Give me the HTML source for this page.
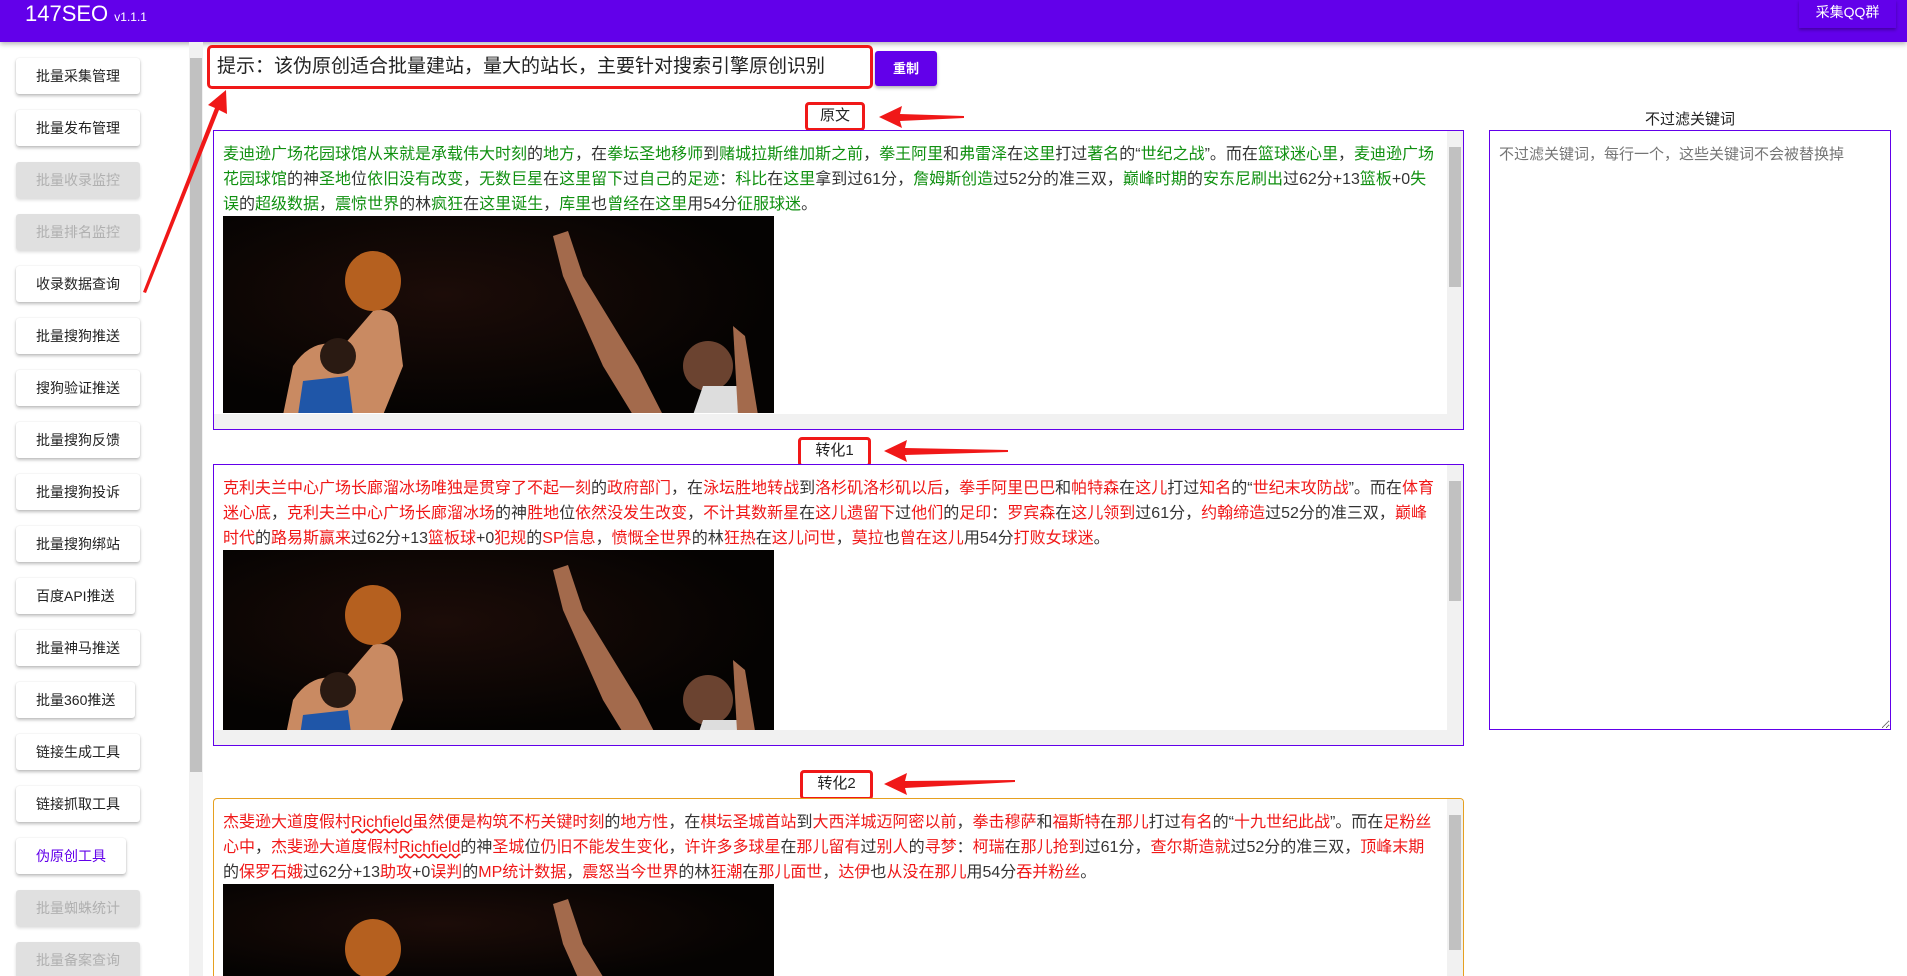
<!DOCTYPE html>
<html><head><meta charset="utf-8">
<style>
*{box-sizing:border-box;margin:0;padding:0}
html{overflow:hidden}
body{width:1907px;height:976px;overflow:hidden;background:#fff;font-family:"Liberation Sans","Noto Sans CJK SC",sans-serif;position:relative;color:#333}
.hdr{position:absolute;left:0;top:0;width:1907px;height:42px;background:#6200ea;box-shadow:0 2px 5px rgba(0,0,0,.3)}
.logo{position:absolute;left:25px;top:0px;color:#fff;font-size:22px;line-height:28px}
.logo small{font-size:12px}
.qq{position:absolute;left:1799px;top:0;width:97px;height:28px;background:#6200ea;color:#fff;font-size:14px;line-height:24px;text-align:center;box-shadow:0 2px 3px rgba(0,0,0,.3)}
.btn{position:absolute;left:16px;height:36px;background:#fff;box-shadow:0 2px 3px rgba(0,0,0,.25),0 0 1px rgba(0,0,0,.15);border-radius:3px;font-size:14px;line-height:36px;padding:0 20px;color:#222}
.btn.dis{background:#e0e0e0;color:#b0b0b0;box-shadow:0 2px 3px rgba(0,0,0,.15)}
.btn.act{color:#6200ea}
.sb{position:absolute;left:189px;top:42px;width:14px;height:934px;background:#f1f1f1}
.sb i{position:absolute;left:1px;top:16px;width:12px;height:714px;background:#c1c1c1}
.tip{position:absolute;left:207px;top:45px;width:666px;height:44px;border:3px solid #f01818;border-radius:5px;font-size:19px;line-height:38px;padding-left:7px;color:#222;white-space:nowrap}
.cz{position:absolute;left:875px;top:51px;width:62px;height:35px;background:#6200ea;color:#fff;font-size:13px;font-weight:bold;text-align:center;line-height:35px;border-radius:3px;box-shadow:0 2px 3px rgba(0,0,0,.3)}
.lbl{position:absolute;font-size:15px;color:#222;text-align:center;border:3px solid #f01818;border-radius:4px;line-height:22px}
.box{position:absolute;left:213px;width:1251px;border:1px solid #6200ea;overflow:hidden;background:#fff}
.txt{position:absolute;left:9px;top:11px;width:1215px;font-size:16px;line-height:25px;color:#333}
.g{color:#109010}.r{color:#f01818}
.u{text-decoration:underline wavy #f01818}
.vs{position:absolute;right:0;top:0;width:16px;background:#f1f1f1}
.vs i{position:absolute;left:2px;width:12px;background:#c1c1c1}
.hs{position:absolute;left:0;right:0;height:15px;background:#f1f1f1}
.img{position:absolute;left:9px;width:551px;background:radial-gradient(ellipse at 40% 40%,#1c0c08,#050302 70%);overflow:hidden}
textarea{position:absolute;left:1489px;top:130px;width:402px;height:600px;border:1px solid #6200ea;font-family:inherit;font-size:15px;padding:12px 9px;color:#999;resize:both}
</style></head><body>
<div class="hdr"><div class="logo">147SEO <small>v1.1.1</small></div><div class="qq">采集QQ群</div></div>

<div class="btn" style="top:58px">批量采集管理</div>
<div class="btn" style="top:110px">批量发布管理</div>
<div class="btn dis" style="top:162px">批量收录监控</div>
<div class="btn dis" style="top:214px">批量排名监控</div>
<div class="btn" style="top:266px">收录数据查询</div>
<div class="btn" style="top:318px">批量搜狗推送</div>
<div class="btn" style="top:370px">搜狗验证推送</div>
<div class="btn" style="top:422px">批量搜狗反馈</div>
<div class="btn" style="top:474px">批量搜狗投诉</div>
<div class="btn" style="top:526px">批量搜狗绑站</div>
<div class="btn" style="top:578px">百度API推送</div>
<div class="btn" style="top:630px">批量神马推送</div>
<div class="btn" style="top:682px">批量360推送</div>
<div class="btn" style="top:734px">链接生成工具</div>
<div class="btn" style="top:786px">链接抓取工具</div>
<div class="btn act" style="top:838px">伪原创工具</div>
<div class="btn dis" style="top:890px">批量蜘蛛统计</div>
<div class="btn dis" style="top:942px">批量备案查询</div>
<div class="sb"><i></i></div>

<div class="tip">提示：该伪原创适合批量建站，量大的站长，主要针对搜索引擎原创识别</div>
<div class="cz">重制</div>

<div class="lbl" style="left:805px;top:102px;width:60px;height:29px">原文</div>
<div class="box" style="top:130px;height:300px">
 <div class="txt"><span class="g">麦迪逊广场花园球馆从来就是承载伟大时刻</span>的<span class="g">地方</span>，在<span class="g">拳坛圣地移师</span>到<span class="g">赌城拉斯维加斯之前</span>，<span class="g">拳王阿里</span>和<span class="g">弗雷泽</span>在<span class="g">这里</span>打过<span class="g">著名</span>的“<span class="g">世纪之战</span>”。而在<span class="g">篮球迷心里</span>，<span class="g">麦迪逊广场花园球馆</span>的神<span class="g">圣地</span>位<span class="g">依旧没有改变</span>，<span class="g">无数巨星</span>在<span class="g">这里留下</span>过<span class="g">自己</span>的<span class="g">足迹</span>：<span class="g">科比</span>在<span class="g">这里</span>拿到过61分，<span class="g">詹姆斯创造</span>过52分的准三双，<span class="g">巅峰时期</span>的<span class="g">安东尼刷出</span>过62分+13<span class="g">篮板</span>+0<span class="g">失误</span>的<span class="g">超级数据</span>，<span class="g">震惊世界</span>的林<span class="g">疯狂</span>在<span class="g">这里诞生</span>，<span class="g">库里</span>也<span class="g">曾经</span>在<span class="g">这里</span>用54分<span class="g">征服球迷</span>。</div>
 <div class="img" style="top:85px;height:197px">
  <svg width="551" height="199"><ellipse cx="150" cy="65" rx="28" ry="30" fill="#b5601f"/><path d="M60 199 L70 150 Q90 120 120 130 L150 95 Q170 90 175 110 L180 150 L160 199Z" fill="#c98a62"/><path d="M75 199 L80 165 L125 160 L130 199Z" fill="#1f56a8"/><circle cx="115" cy="140" r="18" fill="#2a1a12"/><path d="M330 20 L345 15 L360 60 L415 150 L440 199 L410 199 L380 150 L340 60Z" fill="#a36a4c"/><circle cx="485" cy="150" r="25" fill="#6b4330"/><path d="M470 199 L480 170 L520 170 L530 199Z" fill="#ddd"/><path d="M510 110 L522 120 L535 199 L515 199Z" fill="#a36a4c"/></svg>
 </div>
 <div class="vs" style="height:283px"><i style="top:16px;height:140px"></i></div>
 <div class="hs" style="top:283px"></div>
</div>

<div class="lbl" style="left:798px;top:437px;width:73px;height:30px">转化1</div>
<div class="box" style="top:464px;height:282px">
 <div class="txt"><span class="r">克利夫兰中心广场长廊溜冰场唯独是贯穿了不起一刻</span>的<span class="r">政府部门</span>，在<span class="r">泳坛胜地转战</span>到<span class="r">洛杉矶洛杉矶以后</span>，<span class="r">拳手阿里巴巴</span>和<span class="r">帕特森</span>在<span class="r">这儿</span>打过<span class="r">知名</span>的“<span class="r">世纪末攻防战</span>”。而在<span class="r">体育迷心底</span>，<span class="r">克利夫兰中心广场长廊溜冰场</span>的神<span class="r">胜地</span>位<span class="r">依然没发生改变</span>，<span class="r">不计其数新星</span>在<span class="r">这儿遗留下</span>过<span class="r">他们</span>的<span class="r">足印</span>：<span class="r">罗宾森</span>在<span class="r">这儿领到</span>过61分，<span class="r">约翰缔造</span>过52分的准三双，<span class="r">巅峰时代</span>的<span class="r">路易斯赢来</span>过62分+13<span class="r">篮板球</span>+0<span class="r">犯规</span>的<span class="r">SP信息</span>，<span class="r">愤慨全世界</span>的林<span class="r">狂热</span>在<span class="r">这儿问世</span>，<span class="r">莫拉</span>也<span class="r">曾在这儿</span>用54分<span class="r">打败女球迷</span>。</div>
 <div class="img" style="top:85px;height:180px">
  <svg width="551" height="199"><ellipse cx="150" cy="65" rx="28" ry="30" fill="#b5601f"/><path d="M60 199 L70 150 Q90 120 120 130 L150 95 Q170 90 175 110 L180 150 L160 199Z" fill="#c98a62"/><path d="M75 199 L80 165 L125 160 L130 199Z" fill="#1f56a8"/><circle cx="115" cy="140" r="18" fill="#2a1a12"/><path d="M330 20 L345 15 L360 60 L415 150 L440 199 L410 199 L380 150 L340 60Z" fill="#a36a4c"/><circle cx="485" cy="150" r="25" fill="#6b4330"/><path d="M470 199 L480 170 L520 170 L530 199Z" fill="#ddd"/><path d="M510 110 L522 120 L535 199 L515 199Z" fill="#a36a4c"/></svg>
 </div>
 <div class="vs" style="height:265px"><i style="top:16px;height:120px"></i></div>
 <div class="hs" style="top:265px"></div>
</div>

<div class="lbl" style="left:800px;top:770px;width:73px;height:30px">转化2</div>
<div class="box" style="top:798px;height:178px;border-color:#e6a020;border-bottom:none;border-radius:4px 4px 0 0">
 <div class="txt"><span class="r">杰斐逊大道度假村<span class="u">Richfield</span>虽然便是构筑不朽关键时刻</span>的<span class="r">地方性</span>，在<span class="r">棋坛圣城首站</span>到<span class="r">大西洋城迈阿密以前</span>，<span class="r">拳击穆萨</span>和<span class="r">福斯特</span>在<span class="r">那儿</span>打过<span class="r">有名</span>的“<span class="r">十九世纪此战</span>”。而在<span class="r">足粉丝心中</span>，<span class="r">杰斐逊大道度假村<span class="u">Richfield</span></span>的神<span class="r">圣城</span>位<span class="r">仍旧不能发生变化</span>，<span class="r">许许多多球星</span>在<span class="r">那儿留有</span>过<span class="r">别人</span>的<span class="r">寻梦</span>：<span class="r">柯瑞</span>在<span class="r">那儿抢到</span>过61分，<span class="r">查尔斯造就</span>过52分的准三双，<span class="r">顶峰末期</span>的<span class="r">保罗石娥</span>过62分+13<span class="r">助攻</span>+0<span class="r">误判</span>的<span class="r">MP统计数据</span>，<span class="r">震怒当今世界</span>的林<span class="r">狂潮</span>在<span class="r">那儿面世</span>，<span class="r">达伊</span>也<span class="r">从没在那儿</span>用54分<span class="r">吞并粉丝</span>。</div>
 <div class="img" style="top:85px;height:100px">
  <svg width="551" height="199"><ellipse cx="150" cy="65" rx="28" ry="30" fill="#b5601f"/><path d="M330 20 L345 15 L360 60 L415 150 L440 199 L410 199 L380 150 L340 60Z" fill="#a36a4c"/></svg>
 </div>
 <div class="vs" style="height:178px"><i style="top:16px;height:135px"></i></div>
</div>

<div style="position:absolute;left:1489px;top:108px;width:402px;text-align:center;font-size:15px;color:#222">不过滤关键词</div>
<textarea placeholder="不过滤关键词，每行一个，这些关键词不会被替换掉"></textarea>

<svg style="position:absolute;left:0;top:0" width="1907" height="976">
 <g fill="#f01818">
  <path d="M143 292 L146 293 L219 110 L227 114 L226 90 L208 105 L215 108 Z"/>
  <path d="M879 117 L902 106 L900 114 L964 116 L964 118 L900 121 L902 128 Z"/>
  <path d="M884 451 L907 440 L905 448 L1008 450 L1008 452 L905 455 L907 462 Z"/>
  <path d="M884 784 L907 773 L905 781 L1015 780 L1015 782 L905 788 L907 795 Z"/>
 </g>
</svg>
</body></html>
